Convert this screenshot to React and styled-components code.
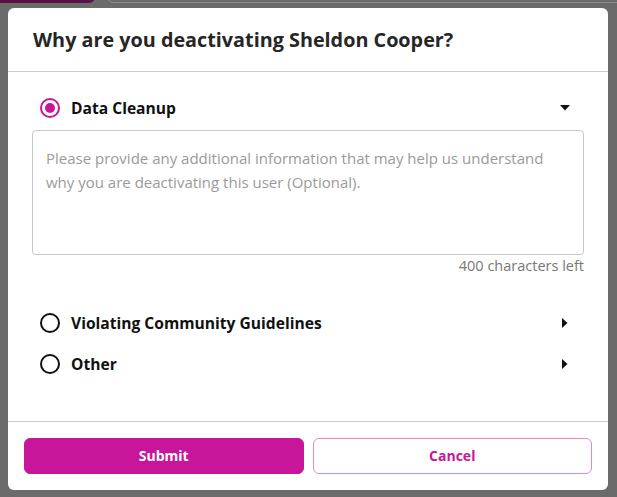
import React, { useState } from "react";
import styled, { createGlobalStyle } from "styled-components";

const GlobalStyle = createGlobalStyle`
  html, body {
    margin: 0;
    padding: 0;
    background: #6b6b6b;
  }
  * { box-sizing: border-box; }
`;

const reasons = [
  { id: "cleanup", label: "Data Cleanup" },
  { id: "guidelines", label: "Violating Community Guidelines" },
  { id: "other", label: "Other" },
];

const MAX_CHARS = 400;

function Radio({ checked }) {
  return (
    <RadioOuter $checked={checked}>
      {checked && <RadioDot />}
    </RadioOuter>
  );
}

function Caret({ open }) {
  return open ? (
    <svg width="10" height="6" viewBox="0 0 10 6">
      <path d="M0 0 L10 0 L5 5.5 Z" fill="#111" />
    </svg>
  ) : (
    <svg width="6" height="10" viewBox="0 0 6 10">
      <path d="M0 0 L5.5 5 L0 10 Z" fill="#111" />
    </svg>
  );
}

export default function App() {
  const [selected, setSelected] = useState("cleanup");
  const [note, setNote] = useState("");

  return (
    <Page>
      <GlobalStyle />
      <BehindTab />
      <BehindPill />
      <Modal>
        <Header>
          <Title>Why are you deactivating Sheldon Cooper?</Title>
        </Header>
        <Body>
          {reasons.map((r) => (
            <Reason key={r.id}>
              <ReasonRow onClick={() => setSelected(r.id)}>
                <Radio checked={selected === r.id} />
                <ReasonLabel>{r.label}</ReasonLabel>
                <CaretBox>
                  <Caret open={selected === r.id} />
                </CaretBox>
              </ReasonRow>
              {selected === r.id && (
                <Details>
                  <NoteArea
                    value={note}
                    maxLength={MAX_CHARS}
                    onChange={(e) => setNote(e.target.value)}
                    placeholder="Please provide any additional information that may help us understand why you are deactivating this user (Optional)."
                  />
                  <Counter>{MAX_CHARS - note.length} characters left</Counter>
                </Details>
              )}
            </Reason>
          ))}
        </Body>
        <Footer>
          <Button $primary>Submit</Button>
          <Button>Cancel</Button>
        </Footer>
      </Modal>
    </Page>
  );
}

const Page = styled.div`
  position: relative;
  width: 100vw;
  height: 100vh;
  overflow: hidden;
  background: #6b6b6b;
  padding: 8px 9px 7px 8px;
  font-family: "Open Sans", "Noto Sans", sans-serif;
`;

const BehindTab = styled.div`
  position: absolute;
  left: 0;
  top: -10px;
  width: 95px;
  height: 13px;
  background: #5a1245;
  border-radius: 0 0 6px 0;
`;

const BehindPill = styled.div`
  position: absolute;
  left: 106px;
  top: -20px;
  width: 520px;
  height: 23px;
  border: 1px solid #8a8a8a;
  border-radius: 8px;
`;

const Modal = styled.div`
  position: relative;
  height: 482px;
  background: #fff;
  border-radius: 6px;
  display: flex;
  flex-direction: column;
`;

const Header = styled.div`
  height: 64px;
  padding: 0 25px;
  display: flex;
  align-items: center;
  border-bottom: 1px solid #cdc8d4;
`;

const Title = styled.h1`
  margin: 0;
  font-size: 19.8px;
  font-weight: 700;
  color: #262626;
`;

const Body = styled.div`
  flex: 1;
  padding: 15px 24px 0 24px;
  display: flex;
  flex-direction: column;
`;

const Reason = styled.div`
  display: flex;
  flex-direction: column;
`;

const ReasonRow = styled.div`
  display: flex;
  align-items: center;
  height: 41px;
  padding: 0 13px 0 8px;
  cursor: pointer;
`;

const RadioOuter = styled.span`
  width: 20px;
  height: 20px;
  border-radius: 50%;
  border: 2px solid ${(p) => (p.$checked ? "#c8169a" : "#111")};
  display: flex;
  align-items: center;
  justify-content: center;
  flex-shrink: 0;
`;

const RadioDot = styled.span`
  width: 10px;
  height: 10px;
  border-radius: 50%;
  background: #c8169a;
`;

const ReasonLabel = styled.span`
  flex: 1;
  margin-left: 11px;
  font-size: 15.6px;
  font-weight: 700;
  color: #111;
`;

const CaretBox = styled.span`
  display: flex;
  align-items: center;
  justify-content: center;
  width: 12px;
`;

const Details = styled.div`
  display: flex;
  flex-direction: column;
  padding-bottom: 27px;
`;

const NoteArea = styled.textarea`
  margin-top: 2px;
  height: 125px;
  resize: none;
  border: 1px solid #c9c9c9;
  border-radius: 4px;
  padding: 15px 13px;
  font-family: "Open Sans", "Noto Sans", sans-serif;
  font-size: 15px;
  font-weight: 400;
  line-height: 24px;
  color: #333;
  outline: none;
  &::placeholder {
    color: #9a9a9a;
  }
`;

const Counter = styled.div`
  align-self: flex-end;
  margin-top: 2px;
  font-size: 14.5px;
  line-height: 18px;
  color: #777;
`;

const Footer = styled.div`
  height: 69px;
  border-top: 1px solid #cdc8d4;
  padding: 16px 16px 0 16px;
  display: grid;
  grid-template-columns: 1fr 1fr;
  gap: 9px;
  align-items: start;
`;

const Button = styled.button`
  height: 36px;
  border-radius: 6px;
  font-family: "Open Sans", "Noto Sans", sans-serif;
  font-size: 14px;
  font-weight: 700;
  line-height: 1;
  padding-bottom: 2px;
  cursor: pointer;
  background: ${(p) => (p.$primary ? "#c8169a" : "#fff")};
  color: ${(p) => (p.$primary ? "#fff" : "#c8169a")};
  border: 1px solid ${(p) => (p.$primary ? "#c8169a" : "#ec86cf")};
`;
